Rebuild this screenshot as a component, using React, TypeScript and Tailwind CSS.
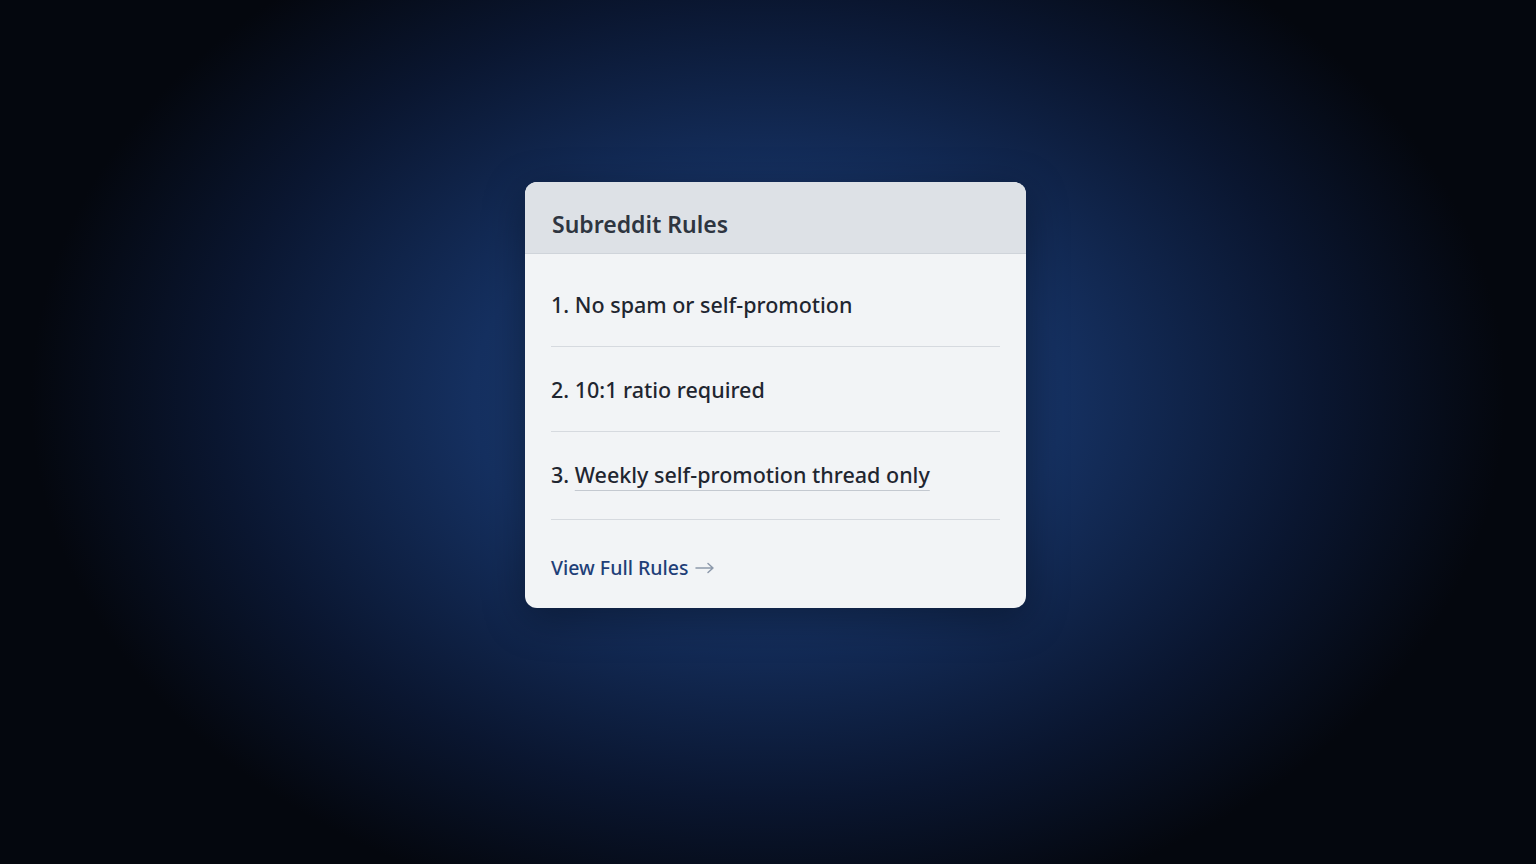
import React from "react";

const rules = [
  { n: 1, text: "No spam or self-promotion" },
  { n: 2, text: "10:1 ratio required" },
  { n: 3, text: "Weekly self-promotion thread only", underline: true },
];

export default function App() {
  return (
    <div
      className="w-full h-[864px] flex items-start justify-center bg-[radial-gradient(ellipse_48%_62%_at_50%_46%,#1d3f75_0%,#153060_40%,#0a1630_75%,#04070e_100%)]"
      style={{ fontFamily: '"Noto Sans", "Open Sans", sans-serif' }}
    >
      <div className="mt-[182px] ml-[15px] w-[501px] rounded-[12px] overflow-hidden bg-[#f2f4f6] shadow-[0_10px_40px_rgba(0,0,0,0.35)]">
        {/* Header */}
        <div className="h-[72px] flex items-center pt-[12px] px-[27px] bg-[#dde1e6] border-b border-[#cfd4da]">
          <h2 className="text-[23px] leading-[30px] font-semibold text-[#2e3540]">Subreddit Rules</h2>
        </div>

        {/* Rules */}
        <div className="px-[26px]">
          {rules.map((r, i) => (
            <div
              key={r.n}
              className={`border-b border-[#d6dadf] ${i === 0 ? "pt-[36px] pb-[26px]" : "pt-[28px]"} ${
                i === 1 ? "pb-[26px]" : ""
              } ${i === 2 ? "pb-[29px]" : ""}`}
            >
              <p className="text-[21.5px] leading-[30px] font-medium text-[#1f2630]">
                {r.n}.{" "}
                <span
                  className={
                    r.underline
                      ? "underline decoration-[#c4c9d0] decoration-[1px] underline-offset-[7px]"
                      : ""
                  }
                >
                  {r.text}
                </span>
              </p>
            </div>
          ))}

          {/* Footer link */}
          <div className="pt-[35px] pb-[27px]">
            <a className="flex items-center gap-[7px] text-[19.5px] leading-[26px] font-medium text-[#1f3f78]">
              View Full Rules
              <svg width="20" height="12" viewBox="0 0 20 12" fill="none" stroke="#8d99ab" strokeWidth="1.5" strokeLinecap="round" strokeLinejoin="round">
                <path d="M1 6h17M13 1.5 18 6l-5 4.5" />
              </svg>
            </a>
          </div>
        </div>
      </div>
    </div>
  );
}
